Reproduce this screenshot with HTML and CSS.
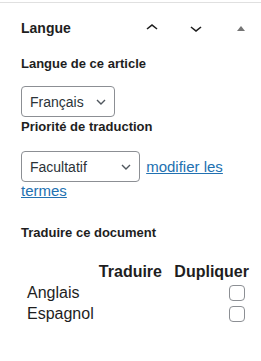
FILE: index.html
```html
<!DOCTYPE html>
<html lang="fr">

<head>
    <meta charset="UTF-8">
    <meta name="viewport" content="width=device-width, initial-scale=1.0">
    <title>Langue</title>
    <link rel="stylesheet" href="styles.css">
</head>

<body>
    <div class="panel">
        <div class="panel-header">
            <h2 class="panel-title">Langue</h2>
            <div class="panel-actions">
                <button class="icon-btn" aria-label="Monter">
                    <svg width="24" height="24" viewBox="0 0 24 24"><path d="M6.5 12.4L12 8l5.5 4.4-.9 1.2L12 10l-4.5 3.6-1-1.2z"/></svg>
                </button>
                <button class="icon-btn" aria-label="Descendre">
                    <svg width="24" height="24" viewBox="0 0 24 24"><path d="M17.5 11.6L12 16l-5.5-4.4.9-1.2L12 14l4.5-3.6 1 1.2z"/></svg>
                </button>
                <button class="icon-btn toggle" aria-label="Replier">
                    <svg width="8" height="5" viewBox="0 0 8 5"><polygon points="4,0 8,5 0,5"/></svg>
                </button>
            </div>
        </div>

        <div class="panel-body">
            <p class="field-label">Langue de ce article</p>
            <div class="select-row first">
                <span class="select-wrap">
                    <select class="select lang-select">
                        <option>Français</option>
                        <option>Anglais</option>
                        <option>Espagnol</option>
                    </select>
                    <svg class="select-arrow" width="10" height="6" viewBox="0 0 10 6"><polyline points="1,1 5,5 9,1"/></svg>
                </span>
            </div>

            <p class="field-label second">Priorité de traduction</p>
            <div class="select-row priority">
                <span class="select-wrap">
                    <select class="select priority-select">
                        <option>Facultatif</option>
                        <option>Normale</option>
                        <option>Haute</option>
                    </select>
                    <svg class="select-arrow" width="10" height="6" viewBox="0 0 10 6"><polyline points="1,1 5,5 9,1"/></svg>
                </span>
                <a href="#" class="terms-link">modifier les termes</a>
            </div>

            <p class="field-label third">Traduire ce document</p>
            <table class="translate-table">
                <thead>
                    <tr>
                        <th class="col-lang"></th>
                        <th class="col-translate">Traduire</th>
                        <th class="col-duplicate">Dupliquer</th>
                    </tr>
                </thead>
                <tbody>
                    <tr>
                        <td class="col-lang">Anglais</td>
                        <td class="col-translate"></td>
                        <td class="col-duplicate"><input type="checkbox" class="check"></td>
                    </tr>
                    <tr>
                        <td class="col-lang">Espagnol</td>
                        <td class="col-translate"></td>
                        <td class="col-duplicate"><input type="checkbox" class="check"></td>
                    </tr>
                </tbody>
            </table>
        </div>
    </div>
</body>

</html>
```

FILE: styles.css
```css
body {
    margin: 0;
    font-family: "Liberation Sans", Arial, sans-serif;
    color: #1e1e1e;
    background-color: #ffffff;
}

.panel {
    margin-top: 2px;
    border-top: 1px solid #e0e0e0;
}

.panel-header {
    display: flex;
    align-items: center;
    height: 50px;
    padding: 0 8px 0 21px;
}

.panel-title {
    flex: 1;
    margin: 0;
    font-size: 14px;
    font-weight: bold;
}

.panel-actions {
    display: flex;
    gap: 20px;
}

.icon-btn {
    display: flex;
    align-items: center;
    justify-content: center;
    width: 24px;
    height: 24px;
    padding: 0;
    border: none;
    background: none;
    cursor: pointer;
}

.icon-btn svg {
    fill: #1e1e1e;
}

.icon-btn.toggle {
    margin-left: 1px;
}

.icon-btn.toggle svg {
    fill: #757575;
}

.panel-body {
    padding: 3px 8px 16px 21px;
}

.field-label {
    margin: 0;
    font-size: 13px;
    font-weight: bold;
    line-height: 16px;
}

.field-label.second {
    margin-top: 2px;
}

.field-label.third {
    margin-top: 26px;
}

.select-row.first {
    margin-top: 14px;
}

.select-row.priority {
    margin-top: 16px;
    font-size: 15px;
}

.select-wrap {
    position: relative;
    display: inline-block;
}

.select {
    appearance: none;
    -webkit-appearance: none;
    height: 31px;
    margin: 0;
    padding: 0 24px 0 8px;
    border: 1px solid #8c8f94;
    border-radius: 4px;
    background-color: #ffffff;
    color: #2c3338;
    font-family: "Liberation Sans", Arial, sans-serif;
    font-size: 14px;
}

.lang-select {
    width: 94px;
}

.priority-select {
    width: 119px;
}

.select-arrow {
    position: absolute;
    top: 13px;
    right: 9px;
    fill: none;
    stroke: #50575e;
    stroke-width: 1.4;
    pointer-events: none;
}

.terms-link {
    margin-left: 2px;
    color: #2271b1;
    text-decoration: underline;
}

.translate-table {
    margin-top: 21px;
    margin-left: 6px;
    border-collapse: collapse;
}

.translate-table th,
.translate-table td {
    padding: 0;
}

.translate-table th {
    height: 20px;
    font-size: 16px;
    font-weight: bold;
    text-align: right;
}

.translate-table td {
    height: 21px;
    font-size: 16px;
}

.col-lang {
    width: 71px;
    text-align: left;
}

.col-translate {
    width: 64px;
}

.translate-table .col-duplicate {
    width: 76px;
    padding-left: 11px;
    text-align: right;
}

.check {
    appearance: none;
    -webkit-appearance: none;
    display: block;
    width: 16px;
    height: 16px;
    margin: 0 4px 0 auto;
    border: 1px solid #8c8f94;
    border-radius: 4px;
    background-color: #ffffff;
}
```
